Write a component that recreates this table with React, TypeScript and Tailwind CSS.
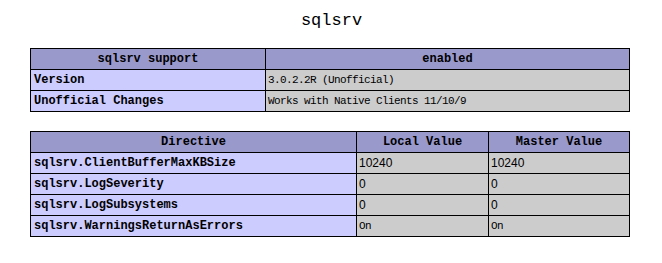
import React from 'react'

const mono = { fontFamily: '"Liberation Mono", "DejaVu Sans Mono", monospace' }

const th = 'border border-black bg-[#9999cc] h-[21px] p-0 text-center font-bold text-[12px] leading-[20px] text-black'
const e = 'border border-black bg-[#ccccff] h-[21px] p-0 pl-[3px] text-left font-bold text-[12px] leading-[20px] text-black whitespace-nowrap'
const v = 'border border-black bg-[#cccccc] h-[21px] p-0 pl-[2px] text-left text-[11px] tracking-[-0.6px] leading-[20px] text-black whitespace-nowrap'
const num = 'border border-black bg-[#cccccc] h-[21px] p-0 pl-[2px] text-left text-[12px] leading-[20px] text-black whitespace-nowrap font-["Liberation_Sans",Arial,sans-serif]'

const directives = [
  { name: 'sqlsrv.ClientBufferMaxKBSize', local: '10240', master: '10240' },
  { name: 'sqlsrv.LogSeverity', local: '0', master: '0' },
  { name: 'sqlsrv.LogSubsystems', local: '0', master: '0' },
  { name: 'sqlsrv.WarningsReturnAsErrors', local: 'On', master: 'On' },
]

export default function App() {
  return (
    <div className="w-[662px] h-[263px] bg-white flex flex-col items-center pt-[10px]" style={mono}>
      <h2 className="text-[17px] leading-[22px] text-black ml-[1px]">sqlsrv</h2>

      {/* sqlsrv support */}
      <table className="w-[600px] table-fixed border-collapse mt-[16px] ml-[-2px]">
        <colgroup>
          <col className="w-[235px]" />
          <col />
        </colgroup>
        <tbody>
          <tr>
            <th className={th}>sqlsrv support</th>
            <th className={th}>enabled</th>
          </tr>
          <tr>
            <td className={e}>Version</td>
            <td className={v}>3.0.2.2R (Unofficial)</td>
          </tr>
          <tr>
            <td className={e}>Unofficial Changes</td>
            <td className={v}>Works with Native Clients 11/10/9</td>
          </tr>
        </tbody>
      </table>

      {/* Directives */}
      <table className="w-[600px] table-fixed border-collapse mt-[19px] ml-[-2px]">
        <colgroup>
          <col className="w-[326px]" />
          <col className="w-[132px]" />
          <col />
        </colgroup>
        <tbody>
          <tr>
            <th className={th}>Directive</th>
            <th className={th}>Local Value</th>
            <th className={th}>Master Value</th>
          </tr>
          {directives.map(d => (
            <tr key={d.name}>
              <td className={e}>{d.name}</td>
              <td className={d.local === 'On' ? v : num}>{d.local}</td>
              <td className={d.master === 'On' ? v : num}>{d.master}</td>
            </tr>
          ))}
        </tbody>
      </table>
    </div>
  )
}
